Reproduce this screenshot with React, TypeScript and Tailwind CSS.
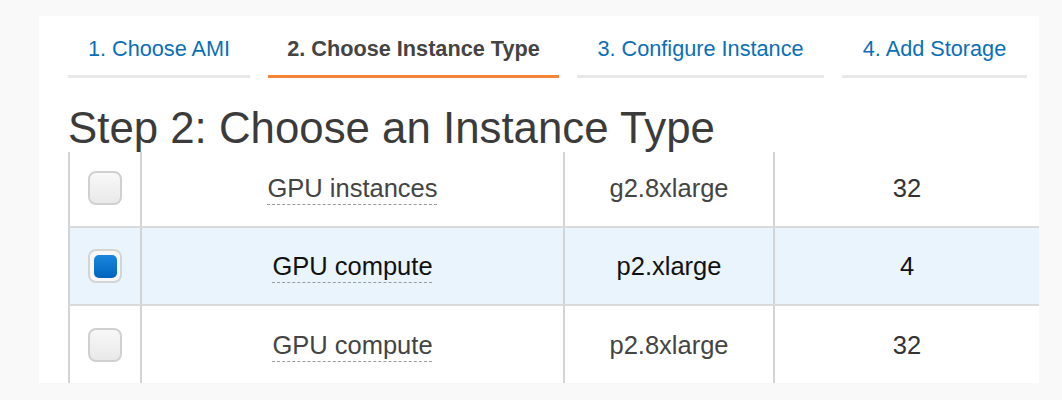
import React from "react";

const tabs = [
  { label: "1. Choose AMI", w: "w-[182px]", active: false },
  { label: "2. Choose Instance Type", w: "w-[291px]", active: true },
  { label: "3. Configure Instance", w: "w-[247px]", active: false },
  { label: "4. Add Storage", w: "w-[185px]", active: false },
];

const rows = [
  { family: "GPU instances", type: "g2.8xlarge", vcpu: "32", selected: false },
  { family: "GPU compute", type: "p2.xlarge", vcpu: "4", selected: true },
  { family: "GPU compute", type: "p2.8xlarge", vcpu: "32", selected: false },
];

function Checkbox({ checked }: { checked: boolean }) {
  return (
    <div
      className={
        "w-[34px] h-[34px] rounded-[8px] border-2 flex items-center justify-center " +
        (checked
          ? "border-[#d4d4d4] bg-[#f7f7f7]"
          : "border-[#d0d0d0] bg-gradient-to-b from-[#f8f8f8] to-[#e9e9e9]")
      }
    >
      {checked && (
        <div className="w-[23px] h-[23px] rounded-[5px] bg-gradient-to-b from-[#1a86dc] to-[#0065bd]" />
      )}
    </div>
  );
}

export default function App() {
  return (
    <div
      className="w-[1062px] h-[400px] bg-[#f9f9f9] pt-[16px] pl-[39px] overflow-hidden"
      style={{ fontFamily: '"Liberation Sans", Arial, Helvetica, sans-serif' }}
    >
      <div className="w-[1000px] h-[367px] bg-white pl-[29px] overflow-hidden">
        {/* Tabs */}
        <div className="flex gap-[18px] pt-[6px]">
          {tabs.map((t, i) => (
            <div
              key={i}
              className={
                t.w +
                " h-[56px] flex items-center justify-center border-b-[3px] text-[21.7px] leading-[26px] whitespace-nowrap " +
                (t.active
                  ? "border-[#f58536] text-[#444] font-bold"
                  : "border-[#e8e8e8] text-[#0a6fb8]")
              }
            >
              {t.label}
            </div>
          ))}
        </div>

        {/* Heading */}
        <h1 className="mt-[28px] text-[43.8px] leading-[43px] text-[#3b3b3b] whitespace-nowrap relative z-10">
          Step 2: Choose an Instance Type
        </h1>

        {/* Table */}
        <div className="mt-[3px] h-[231px] overflow-hidden">
          <div className="-mt-[2px]">
            {rows.map((r, i) => (
              <div
                key={i}
                className={
                  "flex h-[78px] " +
                  (i < rows.length - 1 ? "border-b-2 border-[#dadada] " : "") +
                  (r.selected ? "bg-[#eaf4fd]" : "bg-white")
                }
              >
                <div className="w-[72px] border-l-2 border-[#d4d4d4] flex items-center justify-center">
                  <Checkbox checked={r.selected} />
                </div>
                <div className="w-[423px] border-l-2 border-[#d4d4d4] flex items-center justify-center">
                  <span
                    className={
                      "text-[25.5px] leading-[30px] underline decoration-dashed decoration-1 underline-offset-[7px] decoration-[#9a9a9a] " +
                      (r.selected ? "text-[#111]" : "text-[#444]")
                    }
                  >
                    {r.family}
                  </span>
                </div>
                <div className="w-[210px] border-l-2 border-[#d4d4d4] flex items-center justify-center">
                  <span
                    className={
                      "text-[25.5px] leading-[30px] " +
                      (r.selected ? "text-[#111]" : "text-[#444]")
                    }
                  >
                    {r.type}
                  </span>
                </div>
                <div className="w-[266px] border-l-2 border-[#d4d4d4] flex items-center justify-center">
                  <span
                    className={
                      "text-[25.5px] leading-[30px] " +
                      (r.selected ? "text-[#111]" : "text-[#333]")
                    }
                  >
                    {r.vcpu}
                  </span>
                </div>
              </div>
            ))}
          </div>
        </div>
      </div>
    </div>
  );
}
